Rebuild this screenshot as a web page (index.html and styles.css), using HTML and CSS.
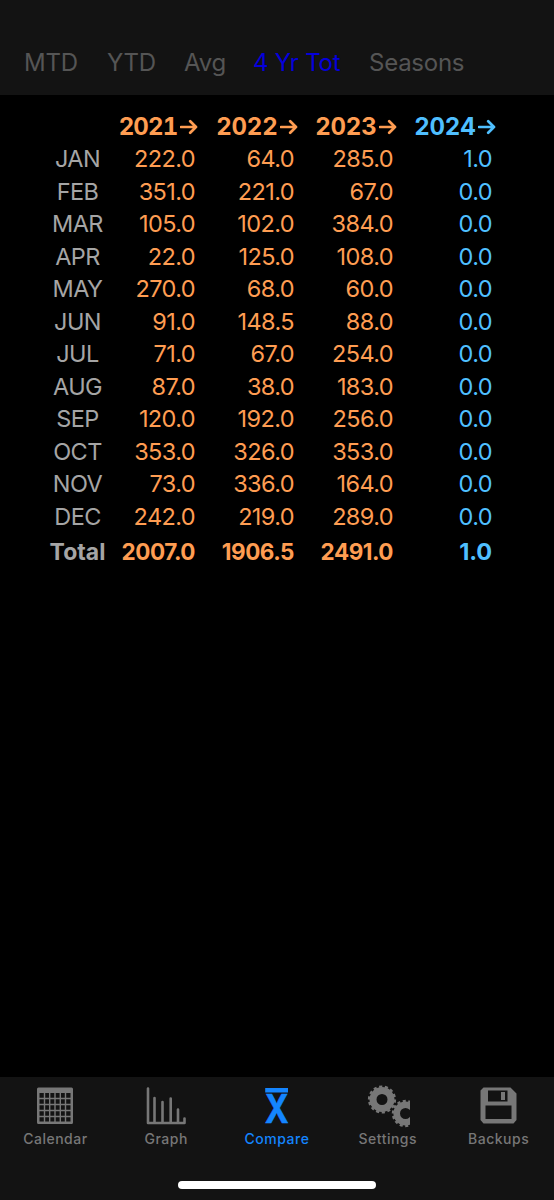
FILE: index.html
```html
<!DOCTYPE html>
<html lang="en">
<head>
<meta charset="utf-8">
<title>Compare</title>
<link rel="stylesheet" href="styles.css">
</head>
<body>
<div class="app">
  <nav class="tabs">
    <span class="tab tab-mtd">MTD</span>
    <span class="tab tab-ytd">YTD</span>
    <span class="tab tab-avg">Avg</span>
    <span class="tab tab-four active">4 Yr Tot</span>
    <span class="tab tab-seasons">Seasons</span>
  </nav>
  <main class="content">
    <div class="row head"><span></span><span class="year first"><b>2021</b><svg class="arrow" viewBox="0 0 18 16"><path d="M1 8H16M10.2 2.3L16 8L10.2 13.7"/></svg></span><span class="year"><b>2022</b><svg class="arrow" viewBox="0 0 18 16"><path d="M1 8H16M10.2 2.3L16 8L10.2 13.7"/></svg></span><span class="year"><b>2023</b><svg class="arrow" viewBox="0 0 18 16"><path d="M1 8H16M10.2 2.3L16 8L10.2 13.7"/></svg></span><span class="year"><b>2024</b><svg class="arrow" viewBox="0 0 18 16"><path d="M1 8H16M10.2 2.3L16 8L10.2 13.7"/></svg></span></div>
    <div class="row"><span>JAN</span><span>222.0</span><span>64.0</span><span>285.0</span><span>1.0</span></div>
    <div class="row"><span>FEB</span><span>351.0</span><span>221.0</span><span>67.0</span><span>0.0</span></div>
    <div class="row"><span>MAR</span><span>105.0</span><span>102.0</span><span>384.0</span><span>0.0</span></div>
    <div class="row"><span>APR</span><span>22.0</span><span>125.0</span><span>108.0</span><span>0.0</span></div>
    <div class="row"><span>MAY</span><span>270.0</span><span>68.0</span><span>60.0</span><span>0.0</span></div>
    <div class="row"><span>JUN</span><span>91.0</span><span>148.5</span><span>88.0</span><span>0.0</span></div>
    <div class="row"><span>JUL</span><span>71.0</span><span>67.0</span><span>254.0</span><span>0.0</span></div>
    <div class="row"><span>AUG</span><span>87.0</span><span>38.0</span><span>183.0</span><span>0.0</span></div>
    <div class="row"><span>SEP</span><span>120.0</span><span>192.0</span><span>256.0</span><span>0.0</span></div>
    <div class="row"><span>OCT</span><span>353.0</span><span>326.0</span><span>353.0</span><span>0.0</span></div>
    <div class="row"><span>NOV</span><span>73.0</span><span>336.0</span><span>164.0</span><span>0.0</span></div>
    <div class="row"><span>DEC</span><span>242.0</span><span>219.0</span><span>289.0</span><span>0.0</span></div>
    <div class="row total"><span>Total</span><span>2007.0</span><span>1906.5</span><span>2491.0</span><span>1.0</span></div>
  </main>
  <footer class="bar">
    <div class="items">
      <div class="item">
        <svg class="icon" viewBox="0 0 44 44"><path fill-rule="evenodd" fill="currentColor" d="M5.500 3.500h33q1.500 0 1.500 1.500v33.500q0 1.500-1.500 1.500h-33q-1.500 0-1.500-1.500V5q0-1.500 1.500-1.500zM6.500 9V37.500H37.500V9z"/><path class="grid" d="M11.500 8V39M16.700 8V39M22 8V39M27.300 8V39M32.500 8V39M5 14.500H39M5 20.500H39M5 26.500H39M5 32.500H39"/></svg>
        <span class="label">Calendar</span>
      </div>
      <div class="item">
        <svg class="icon" viewBox="0 0 44 44"><path class="bars" d="M4 4.500V39H40.500V34.500M10.500 38.500V14M18.500 38.500V18M26.700 38.500V14.500M34 38.500V25.500"/></svg>
        <span class="label">Graph</span>
      </div>
      <div class="item active">
        <svg class="icon" viewBox="0 0 44 44"><rect x="10.200" y="4" width="22.800" height="4.500" fill="currentColor"/><text class="mean" x="9.700" y="39.200" textLength="24" lengthAdjust="spacingAndGlyphs">X</text></svg>
        <span class="label">Compare</span>
      </div>
      <div class="item">
        <svg class="icon gears" viewBox="0 0 44 44">
          <g fill="none" stroke="currentColor"><circle cx="16" cy="15.500" r="9" stroke-width="7"/><circle cx="16" cy="15.500" r="13" stroke-width="2.200" pathLength="140" stroke-dasharray="5.500 4.500"/>
          <circle cx="39.500" cy="29.500" r="8.800" stroke-width="6.600"/><circle cx="39.500" cy="29.500" r="12.600" stroke-width="2.200" pathLength="140" stroke-dasharray="5.500 4.500"/></g>
        </svg>
        <span class="label">Settings</span>
      </div>
      <div class="item">
        <svg class="icon" viewBox="0 0 44 44"><path fill="currentColor" fill-rule="evenodd" d="M6.500 3.500H33.500L39.500 9.500V36L36.500 39.500H6.500L3.500 36V6.500zM11 6.500V17.500H30.500V6.500zM8.500 21.500V35H34.500V21.500zM24 8H28V16H24z"/></svg>
        <span class="label">Backups</span>
      </div>
    </div>
    <div class="home"></div>
  </footer>
</div>
</body>
</html>
```
FILE: styles.css
```css
body { margin: 0; background: #000; }
.app {
  width: 554px;
  height: 1200px;
  display: flex;
  flex-direction: column;
  overflow: hidden;
  background: #000;
  color: #a5a5a5;
  font-family: Inter, "Liberation Sans", sans-serif;
}
.tabs {
  box-sizing: border-box;
  height: 95px;
  padding: 47px 0 0 24px;
  display: flex;
  background: #131313;
  color: #555;
  font-size: 24px;
  line-height: 31px;
  letter-spacing: -.25px;
  white-space: nowrap;
}
.tab-mtd { width: 83px; }
.tab-ytd { width: 77px; }
.tab-avg { width: 69px; }
.tab-four { width: 116px; }
.tabs .active { color: #0500dc; }
.content {
  flex: 1;
  padding-top: 15.6px;
}
.row {
  display: grid;
  grid-template-columns: 75px 80px 99px 99px 99px;
  padding-left: 40px;
  height: 32.5px;
  line-height: 32.5px;
  font-size: 23.5px;
  letter-spacing: -.6px;
  color: #ff9d52;
  text-align: right;
}
.row > span:first-child { color: #a5a5a5; text-align: center; }
.row > span:last-child { color: #4fbfff; }
.total { font-weight: 700; padding-top: 3px; font-size: 22.5px; letter-spacing: -.5px; }
.total > span:first-child { font-size: 23px; letter-spacing: 0; }
.total > span:last-child { font-size: 23.5px; letter-spacing: -.1px; }
.head > .year {
  display: flex;
  justify-content: flex-end;
  align-items: center;
  margin-right: -3.5px;
  font-size: 24px;
  letter-spacing: -.2px;
  font-variant-numeric: tabular-nums;
}
.head > .first { margin-right: -2.5px; letter-spacing: -.8px; }
.arrow { width: 18px; height: 16px; margin-left: 2px; }
.arrow path {
  fill: none;
  stroke: currentColor;
  stroke-width: 2.7;
  stroke-linecap: round;
  stroke-linejoin: round;
}
.bar {
  height: 123px;
  flex: none;
  display: flex;
  flex-direction: column;
  align-items: center;
  background: #131313;
  color: #777;
}
.items {
  width: 554px;
  display: grid;
  grid-template-columns: repeat(5, 110.8px);
  height: 104px;
}
.item {
  display: flex;
  flex-direction: column;
  align-items: center;
  padding-top: 7px;
}
.item.active { color: #1485ff; }
.icon { width: 44px; height: 44px; overflow: visible; }
.icon.gears { overflow: hidden; }
.grid { fill: none; stroke: currentColor; stroke-width: 1.4; }
.bars { fill: none; stroke: currentColor; stroke-width: 2.6; stroke-linecap: round; stroke-linejoin: round; }
.mean { font: 700 40px Inter, sans-serif; fill: currentColor; stroke: currentColor; stroke-width: .5; }
.label { margin-top: 1px; font-size: 14px; line-height: 20px; font-weight: 500; letter-spacing: .5px; }
.home { width: 198px; height: 8px; border-radius: 4px; background: #fff; }
```
